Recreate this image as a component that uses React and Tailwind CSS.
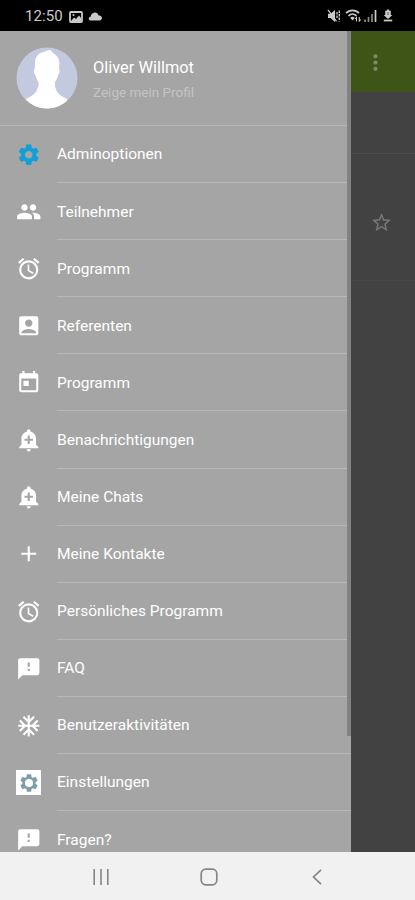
import {
    MdSettings,
    MdPeople,
    MdAccessAlarm,
    MdAccountBox,
    MdToday,
    MdAdd,
    MdFeedback,
    MdAcUnit,
    MdMoreVert,
    MdStarOutline,
} from 'react-icons/md';

const menuItems = [
    { label: 'Adminoptionen', icon: MdSettings, color: 'text-[#109fd6]' },
    { label: 'Teilnehmer', icon: MdPeople },
    { label: 'Programm', icon: MdAccessAlarm },
    { label: 'Referenten', icon: MdAccountBox },
    { label: 'Programm', icon: MdToday },
    { label: 'Benachrichtigungen', icon: AlertBell },
    { label: 'Meine Chats', icon: AlertBell },
    { label: 'Meine Kontakte', icon: MdAdd },
    { label: 'Persönliches Programm', icon: MdAccessAlarm },
    { label: 'FAQ', icon: MdFeedback },
    { label: 'Benutzeraktivitäten', icon: MdAcUnit },
    { label: 'Einstellungen', icon: BoxedGear },
    { label: 'Fragen?', icon: MdFeedback },
];

// bell with a wide rim and a plus cut out
function AlertBell({ className }) {
    return (
        <svg viewBox="0 0 24 24" className={className} fill="currentColor">
            <path d="M10.01 21.01c0 1.1.89 1.99 1.99 1.99s1.99-.89 1.99-1.99h-3.98zm8.87-4.19V11c0-3.25-2.25-5.97-5.29-6.69v-.72C13.59 2.71 12.88 2 12 2s-1.59.71-1.59 1.59v.72C7.37 5.03 5.12 7.75 5.12 11v5.82L3 18.94V20h18v-1.06l-2.12-2.12zM16 13.01h-3v3h-2v-3H8V11h3V8h2v3h3v2.01z" />
        </svg>
    );
}

// settings gear with a wide hole, on a white tile
function BoxedGear() {
    return (
        <span className="relative w-[25px] h-[25px] bg-white flex items-center justify-center">
            <MdSettings className="w-[22px] h-[22px] text-[#7f9ea9]" />
            <span className="absolute w-[8px] h-[8px] rounded-full bg-white" />
        </span>
    );
}

function StatusBar() {
    return (
        <div className="h-[31px] shrink-0 bg-black flex items-center justify-between pl-[25px] pr-[22px] text-[#c9c9c9]">
            <div className="flex items-center pt-[2px]">
                <span className="text-[15px] leading-none tracking-[0.1px] w-[44px]">12:50</span>
                <svg viewBox="0 0 14 12" className="w-[14px] h-3">
                    <rect x="1" y="1" width="12" height="10" rx="1" fill="none" stroke="currentColor" strokeWidth="1.8" />
                    <path d="M2 10 5 6.5l2 1.5 3-3.5 2 2.5v3.5H2z" fill="currentColor" />
                    <circle cx="4.5" cy="3.9" r="1" fill="currentColor" />
                </svg>
                <svg viewBox="0 0 14 9" className="w-[14px] h-[9px] ml-[5px]">
                    <path d="M2 8.5A1.9 1.9 0 0 1 2.5 4.8C3.2 2 5.2.6 7 .6s3.2 1.2 3.6 3A2.5 2.5 0 0 1 12 8.5z" fill="currentColor" />
                </svg>
            </div>
            <div className="flex items-center">
                <svg viewBox="0 0 14 14" className="w-[14px] h-[14px]">
                    <path d="M1 4.8h2.5L8 1v12L3.5 9H1z" fill="currentColor" />
                    <path d="M1 .8 9.5 12.3" stroke="currentColor" strokeWidth="1.3" />
                    <path d="M10 3v7M12.3 1.5v11" stroke="currentColor" strokeWidth="1.3" strokeDasharray="2.5 1" />
                </svg>
                <svg viewBox="0 0 16 13" className="w-4 h-[13px] ml-1">
                    <path d="M1 4.2C4.5.4 10.5.4 14 4.2M3.5 6.8c2.3-2.3 5.7-2.3 8 0" fill="none" stroke="currentColor" strokeWidth="1.7" />
                    <path d="M5.2 8.8c1.5-1.3 3.1-1.3 4.6 0L7.5 11.5z" fill="currentColor" />
                    <path d="M11.5 12.5V8.5l-1.3 1.5M14.3 8v4l1.3-1.5" fill="none" stroke="currentColor" strokeWidth="1.1" />
                </svg>
                <svg viewBox="0 0 13 12" className="w-[13px] h-3 ml-[3px]">
                    <path d="M1 12V9.5M4.5 12V7M8 12V4" stroke="#8b8b8b" strokeWidth="1.7" />
                    <path d="M11.5 12V0" stroke="currentColor" strokeWidth="1.7" />
                </svg>
                <svg viewBox="0 0 10 13" className="w-[10px] h-[13px] ml-[6px]">
                    <path d="M3.8.5h2.4v1.3h1.6v4.2h1.6L5 10 .6 6h1.6V1.8h1.6z" fill="currentColor" />
                    <path d="M.8 11.5h8.4" stroke="currentColor" strokeWidth="1.8" />
                    <path d="M5 3v3" stroke="#555" strokeWidth="1" />
                </svg>
            </div>
        </div>
    );
}

function Profile() {
    return (
        <div className="h-[94px] shrink-0 flex items-center pl-4 pb-px border-b border-[#b8b8b8]">
            <svg viewBox="0 0 62 62" className="w-[62px] h-[62px]">
                <clipPath id="avatar">
                    <circle cx="31" cy="31" r="30.5" />
                </clipPath>
                <g clipPath="url(#avatar)">
                    <rect width="62" height="62" fill="#c3cae0" />
                    <path
                        d="M19 16c0-6 3-10 9-11 2-1.5 5-2 7-2 .5 1.5 1.5 2.5 3.5 4 4 3 5 6 4.8 11l-.3 4c1.2 1 .8 4-.8 6-.6 3-2 5-3.2 7v4c1 6 4 9 12 13v10H10V52c8-4 11-7 12.500-13v-4c-1.500-2-2.500-4-3.200-7-1.700-2-2-5-.6-6z"
                        fill="#fff"
                    />
                </g>
            </svg>
            <div className="ml-[15px] pt-[4px] flex flex-col">
                <span className="text-[16.4px] leading-6 text-white">Oliver Willmot</span>
                <span className="text-[13.5px] leading-6 text-[#c4c4c4]">Zeige mein Profil</span>
            </div>
        </div>
    );
}

function MenuItem({ item, last }) {
    const Icon = item.icon;

    return (
        <li className="h-[57.1px] shrink-0 flex items-stretch">
            <div className="w-[57px] shrink-0 flex items-center pl-4">
                <Icon className={`w-[25.5px] h-[25.5px] ${item.color ?? 'text-white'}`} />
            </div>
            <div className={`flex-1 flex items-center pt-[2px] text-[15.5px] text-white ${last ? '' : 'border-b border-[#b8b8b8]'}`}>
                {item.label}
            </div>
        </li>
    );
}

function NavBar() {
    return (
        <div className="h-12 shrink-0 bg-[#f1f1f1] flex items-center pt-[2px] text-[#858585]">
            <svg viewBox="0 0 16 16" className="w-4 h-4 ml-[93px]">
                <path d="M1.2 0v16M8 0v16M14.8 0v16" stroke="currentColor" strokeWidth="1.6" />
            </svg>
            <svg viewBox="0 0 18 18" className="w-[18px] h-[18px] ml-[91px]">
                <rect x="1.2" y="1.2" width="15.6" height="15.6" rx="4.5" fill="none" stroke="currentColor" strokeWidth="1.7" />
            </svg>
            <svg viewBox="0 0 10 16" className="w-[10px] h-4 ml-[94px]">
                <path d="M9 .8 1.5 8 9 15.2" fill="none" stroke="currentColor" strokeWidth="1.7" />
            </svg>
        </div>
    );
}

export default function App() {
    return (
        <div className="w-[415px] h-[900px] flex flex-col overflow-hidden font-['Roboto',sans-serif]">
            <StatusBar />
            <div className="h-[821px] flex bg-[#424242]">
                <aside className="relative w-[351px] pt-px bg-[#a5a5a5] flex flex-col overflow-hidden">
                    <Profile />
                    <ul className="flex flex-col">
                        {menuItems.map((item, i) => (
                            <MenuItem key={i} item={item} last={i === menuItems.length - 1} />
                        ))}
                    </ul>
                    {/* scroll indicator */}
                    <div className="absolute top-0 right-0 w-[4px] h-[705px] bg-[#828282]" />
                </aside>
                {/* dimmed page behind the drawer */}
                <main className="flex-1 flex flex-col">
                    <div className="h-[61px] bg-[#3f5517] flex items-center pl-[12px] pt-[2px]">
                        <MdMoreVert className="w-[25px] h-[25px] text-[#7d8a66]" />
                    </div>
                    <div className="h-[62px] border-b border-[#4b4b4b]" />
                    <div className="h-[127px] border-b border-[#474747] flex items-center pl-[19px] pt-[11px]">
                        <MdStarOutline className="w-[23px] h-[23px] text-[#767676]" />
                    </div>
                </main>
            </div>
            <NavBar />
        </div>
    );
}
